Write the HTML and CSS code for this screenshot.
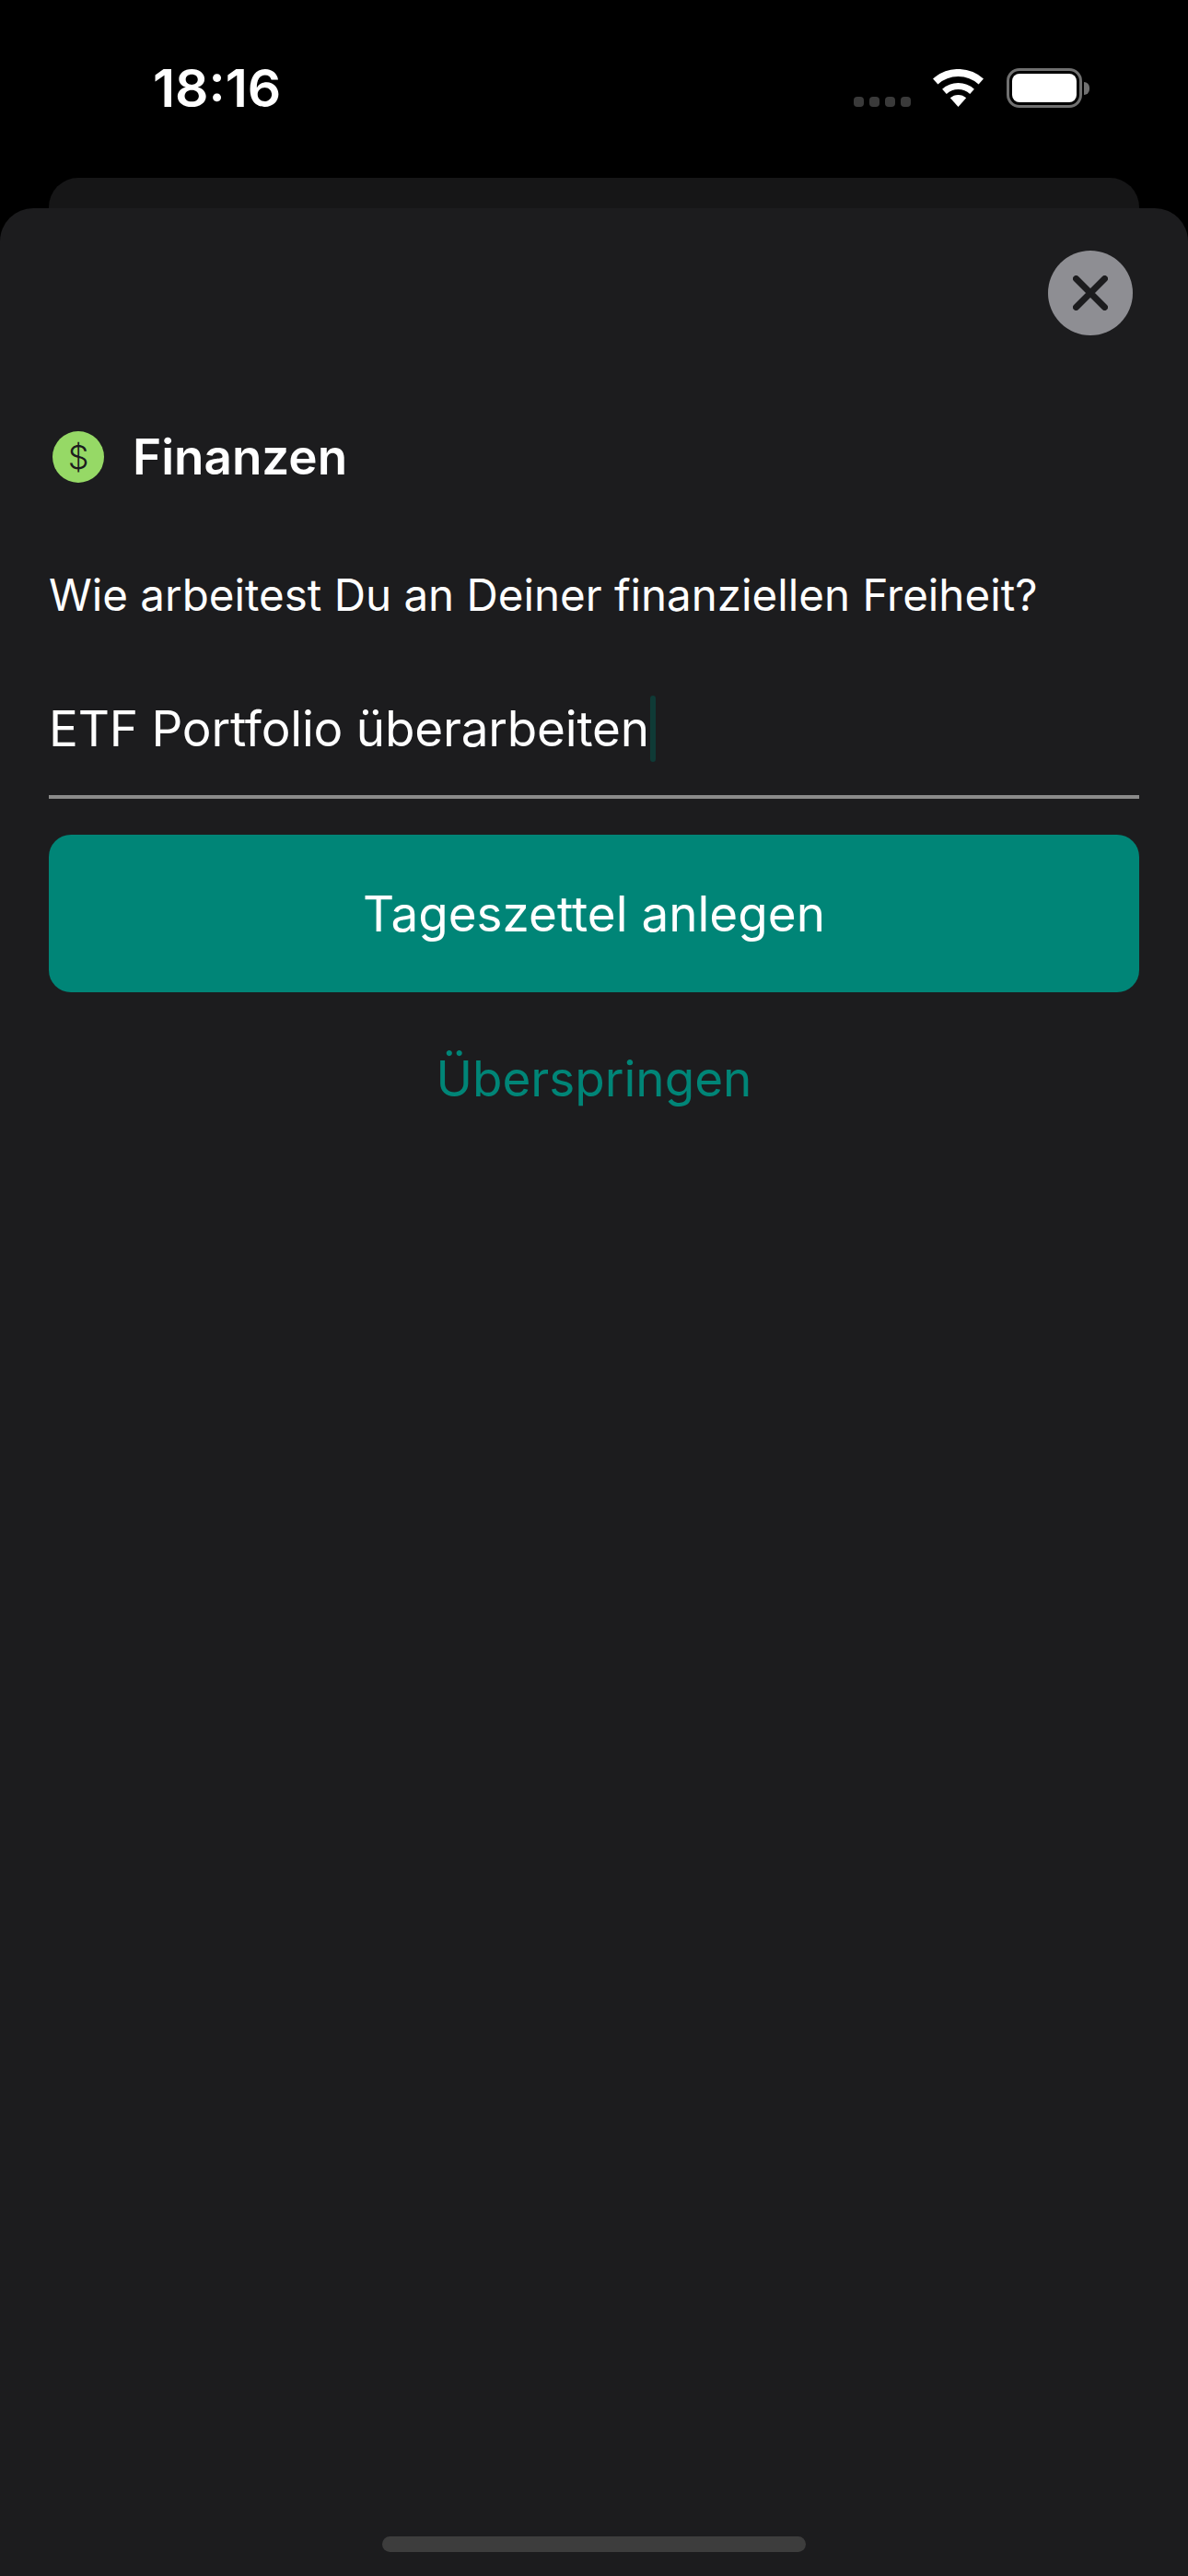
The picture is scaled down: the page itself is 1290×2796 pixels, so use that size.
FILE: index.html
```html
<!DOCTYPE html>
<html>
<head>
  <meta charset="utf-8">
  <link rel="stylesheet" href="styles.css">
</head>
<body>
  <div class="status-bar">
    <div class="time">18:16</div>
    <div class="status-icons">
      <div class="signal">
        <span class="dot"></span>
        <span class="dot"></span>
        <span class="dot"></span>
        <span class="dot"></span>
      </div>
      <svg class="wifi" width="55" height="41" viewBox="0 0 55 41">
        <path d="M2.7 13.5A37 37 0 0 1 52.3 13.5" fill="none" stroke="#fff" stroke-width="8"/>
        <path d="M12.45 24.3A22.5 22.5 0 0 1 42.55 24.3" fill="none" stroke="#fff" stroke-width="7"/>
        <path d="M27.5 41L18.8 31.3A13 13 0 0 1 36.2 31.3Z" fill="#fff"/>
      </svg>
      <div class="battery">
        <div class="battery-body">
          <div class="battery-level"></div>
        </div>
        <div class="battery-nub"></div>
      </div>
    </div>
  </div>

  <div class="back-card"></div>

  <div class="sheet">
    <div class="sheet-top">
      <button class="close-btn">
        <svg width="38" height="38" viewBox="0 0 38 38">
          <path d="M3.5 3.5L34.5 34.5M34.5 3.5L3.5 34.5" fill="none" stroke="#1c1c1e" stroke-width="7" stroke-linecap="round"/>
        </svg>
      </button>
    </div>

    <div class="category">
      <div class="category-icon">$</div>
      <h1>Finanzen</h1>
    </div>

    <p class="question">Wie arbeitest Du an Deiner finanziellen Freiheit?</p>

    <div class="input-row">
      <span class="input-text">ETF Portfolio überarbeiten</span><span class="caret"></span>
    </div>

    <button class="add-btn">Tageszettel anlegen</button>
    <button class="skip-btn">Überspringen</button>

    <div class="home-indicator"></div>
  </div>
</body>
</html>
```

FILE: styles.css
```css
html, body {
  margin: 0;
  height: 2796px;
  overflow: hidden;
}

body {
  display: flex;
  flex-direction: column;
  background-color: #000;
  color: #fff;
  font-family: Inter, "Liberation Sans", sans-serif;
}

button {
  border: none;
  padding: 0;
  font-family: inherit;
}

.status-bar {
  height: 193px;
  flex-shrink: 0;
  box-sizing: border-box;
  padding: 66px 107px 0 166px;
  display: flex;
  justify-content: space-between;
  align-items: flex-start;
}

.time {
  font-size: 57px;
  font-weight: 600;
  line-height: 60px;
}

.status-icons {
  display: flex;
  align-items: flex-start;
  padding-top: 8px;
}

.signal {
  display: flex;
  gap: 6px;
  margin-top: 31px;
  margin-right: 24px;
}

.dot {
  width: 11px;
  height: 11px;
  border-radius: 4px;
  background-color: #3a3a3a;
}

.wifi {
  margin-top: 1px;
  margin-right: 25px;
}

.battery {
  display: flex;
  align-items: center;
}

.battery-body {
  width: 82px;
  height: 43px;
  box-sizing: border-box;
  padding: 3px;
  border: 3px solid #707070;
  border-radius: 14px;
}

.battery-level {
  height: 100%;
  background-color: #fff;
  border-radius: 8px;
}

.battery-nub {
  width: 6px;
  height: 14px;
  margin-left: 2px;
  background-color: #707070;
  border-radius: 0 7px 7px 0;
}

.back-card {
  height: 33px;
  flex-shrink: 0;
  margin: 0 53px;
  background-color: #161617;
  border-radius: 32px 32px 0 0;
}

.sheet {
  flex: 1;
  display: flex;
  flex-direction: column;
  padding: 0 53px;
  background-color: #1c1c1e;
  border-radius: 36px 36px 0 0;
}

.sheet-top {
  display: flex;
  justify-content: flex-end;
  padding: 46px 7px 0 0;
}

.close-btn {
  width: 92px;
  height: 92px;
  border-radius: 50%;
  background-color: #8e8e93;
  display: flex;
  align-items: center;
  justify-content: center;
}

.category {
  display: flex;
  align-items: center;
  gap: 31px;
  margin-top: 104px;
  padding-left: 4px;
}

.category-icon {
  width: 56px;
  height: 56px;
  border-radius: 50%;
  background-color: #96d966;
  color: #1c1c1e;
  font-size: 36px;
  font-weight: 300;
  line-height: 56px;
  text-align: center;
}

h1 {
  margin: 0;
  font-size: 53px;
  font-weight: 600;
  line-height: 56px;
}

.question {
  margin: 92px 0 0;
  font-size: 47.5px;
  line-height: 60px;
}

.input-row {
  display: flex;
  align-items: flex-end;
  height: 191px;
  box-sizing: border-box;
  border-bottom: 4px solid #8a8a8a;
  padding-bottom: 36px;
  font-size: 53px;
  letter-spacing: -0.2px;
  line-height: 72px;
}

.caret {
  width: 6px;
  height: 72px;
  margin-left: 1px;
  border-radius: 3px;
  background-color: #0f3a36;
}

.add-btn {
  height: 171px;
  flex-shrink: 0;
  margin-top: 39px;
  border-radius: 24px;
  background-color: #008577;
  color: #fff;
  font-size: 53px;
}

.skip-btn {
  margin-top: 64px;
  background: none;
  color: #008577;
  font-size: 53px;
  line-height: 60px;
}

.home-indicator {
  width: 460px;
  height: 17px;
  margin: auto auto 26px;
  border-radius: 9px;
  background-color: #3d3d3d;
}
```
